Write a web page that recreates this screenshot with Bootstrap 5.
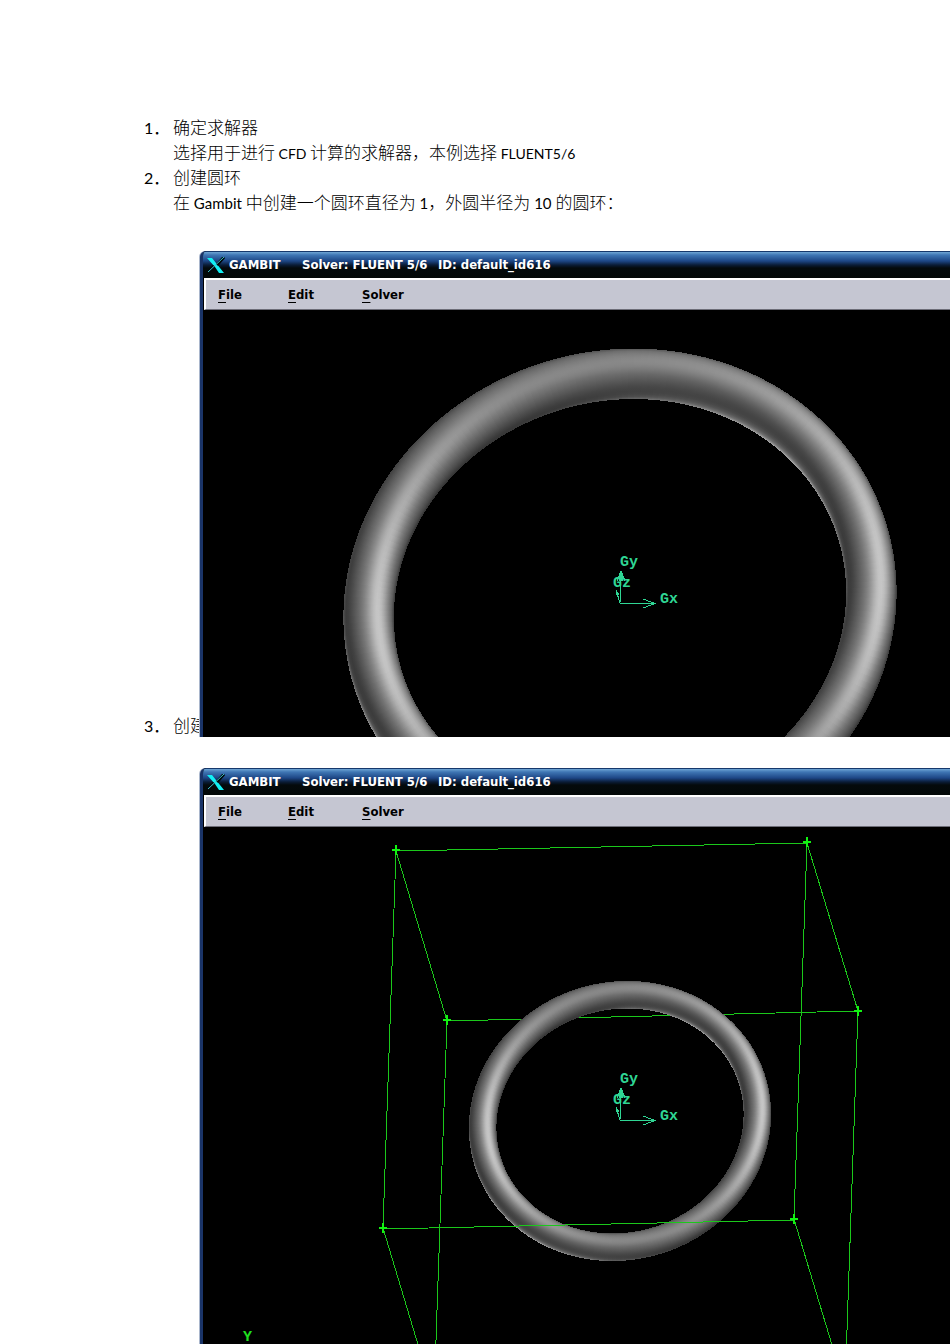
<!DOCTYPE html>
<html lang="zh-CN">
<head>
<meta charset="utf-8">
<meta name="viewport" content="width=device-width, initial-scale=1">
<title>GAMBIT</title>
<link href="https://cdn.jsdelivr.net/npm/bootstrap@5.3.0/dist/css/bootstrap.min.css" rel="stylesheet">
<style>
  body { background: #fff; color: #000; overflow-x: hidden; }
  .doc { padding-top: 115px; font: 300 17px/25px Lato, "Noto Sans CJK SC", sans-serif; }
  .step-line { padding-left: 144px; }
  .step-no { width: 29px; font-size: 16px; font-weight: 400; flex: none; }
  .latin { font-size: 15px; line-height: 1; font-weight: 400; }
  .latin-caps { font-size: 14px; }
  .step-three { margin-top: -24px; }
  .shot { position: relative; z-index: 1; margin: 36px 0 0 200px; background: #000;
    border-left: 3px solid #1a3468; border-top-left-radius: 6px; overflow: hidden;
    box-shadow: -1px 0 0 #a9b6cc; }
  .shot-second { margin-top: 30px; }
  .title-strip { height: 27px; border-top: 1px solid #16386c; color: #fff;
    background: linear-gradient(#6fa5d4 0, #3f76b4 3px, #1d4685 9px, #0a1c36 13px, #040a0c 16px, #030807 100%);
    font: bold 13px/26px "DejaVu Sans Condensed", "DejaVu Sans", sans-serif; }
  .title-app { width: 73px; }
  .title-solver { width: 136px; }
  .menu-strip { height: 32px; margin-left: 1px; background: #c5c6d2; border-top: 2px solid #fff;
    border-left: 2px solid #fff; border-bottom: 1px solid #6d6d78; padding-left: 12px; }
  .menu-strip button { border: 0; padding: 0; background: none; color: #000; text-align: left;
    font: bold 13px/28px "DejaVu Sans Condensed", "DejaVu Sans", sans-serif; }
  .menu-strip u { text-underline-offset: 3px; text-decoration-thickness: 1px; }
  .menu-file { width: 70px; }
  .menu-edit { width: 74px; }
  .scene { display: block; width: 100%; height: 427px; }
  .scene-tall { height: 517px; }
  .axes { fill: none; stroke: #2fd694; shape-rendering: crispEdges; }
  .glyphs { font: bold 15px "Liberation Mono", monospace; fill: #2fd694; stroke: none; }
  .glyphs-y { fill: #1fe01f; }
  .brick { fill: none; stroke: #1bc81b; shape-rendering: crispEdges; }
  .corner { stroke: #12f312; stroke-width: 2; }
</style>
</head>
<body>
<svg width="0" height="0" class="position-absolute" aria-hidden="true">
  <defs>
    <g id="torus" shape-rendering="crispEdges"></g>
    <g id="axes" class="axes">
      <path d="M.5-1V-29M0 .5H35M23-4 35 .5 23 5M0 0-4-13M-4-13-4-8M-4-13-1-8"/>
      <path d="M1-32-3-22M1-32 5-22M1-32V-22M0-30-1-22M2-30 3-22"/>
      <g class="glyphs"><text x="0" y="-37">Gy</text><text x="-7" y="-16">Gz</text><text x="40" y="0">Gx</text></g>
    </g>
    <path id="corner" class="corner" d="M-4 0H4M0-5V5"/>
    <g id="xlogo">
      <path d="M0 1H5L17 16H12L8 10Z" fill="#12f0f4"/>
      <path d="M17 0 10 8M7 9 1 15" stroke="#02080a" stroke-width="3"/>
      <path d="M17 0 1 15" stroke="#3cc4cc" stroke-width="1"/>
    </g>
  </defs>
</svg>

<main class="doc">
  <div class="step-line d-flex"><span class="step-no">1．</span><span>确定求解器<br>选择用于进行<span class="latin latin-caps"> CFD </span>计算的求解器，本例选择<span class="latin latin-caps"> FLUENT5/6</span></span></div>
  <div class="step-line d-flex"><span class="step-no">2．</span><span>创建圆环<br>在<span class="latin"> Gambit </span>中创建一个圆环直径为<span class="latin"> 1</span>，外圆半径为<span class="latin"> 10 </span>的圆环：</span></div>

  <figure class="shot">
    <div class="title-strip d-flex align-items-center text-nowrap">
      <svg class="ms-1 me-1 flex-shrink-0" width="18" height="16" aria-hidden="true"><use href="#xlogo"/></svg>
      <span class="title-app flex-shrink-0">GAMBIT</span><span class="title-solver flex-shrink-0">Solver: FLUENT 5/6</span><span>ID: default_id616</span>
    </div>
    <nav class="menu-strip d-flex">
      <button type="button" class="menu-file"><u>F</u>ile</button><button type="button" class="menu-edit"><u>E</u>dit</button><button type="button"><u>S</u>olver</button>
    </nav>
    <svg class="scene" role="img" aria-label="圆环">
      <g transform="translate(417 293)">
        <use href="#torus" y="1" transform="scale(1.83)"/>
        <use href="#axes"/>
      </g>
    </svg>
  </figure>

  <div class="step-line step-three d-flex"><span class="step-no">3．</span><span>创建</span></div>

  <figure class="shot shot-second mb-0">
    <div class="title-strip d-flex align-items-center text-nowrap">
      <svg class="ms-1 me-1 flex-shrink-0" width="18" height="16" aria-hidden="true"><use href="#xlogo"/></svg>
      <span class="title-app flex-shrink-0">GAMBIT</span><span class="title-solver flex-shrink-0">Solver: FLUENT 5/6</span><span>ID: default_id616</span>
    </div>
    <nav class="menu-strip d-flex">
      <button type="button" class="menu-file"><u>F</u>ile</button><button type="button" class="menu-edit"><u>E</u>dit</button><button type="button"><u>S</u>olver</button>
    </nav>
    <svg class="scene scene-tall" role="img" aria-label="长方体与圆环">
      <g transform="translate(417 293)">
        <path class="brick" d="M-224-269 187-277 238-109-173-99ZM-224-269-237 108-186 278-173-99M187-277 174 99 225 268 238-109"/>
        <use href="#torus" y="1"/>
        <path class="brick" d="M-237 109 174 100"/>
        <use href="#corner" x="-224" y="-270"/><use href="#corner" x="187" y="-278"/>
        <use href="#corner" x="238" y="-109"/><use href="#corner" x="-173" y="-100"/>
        <use href="#corner" x="-237" y="108"/><use href="#corner" x="174" y="99"/>
        <use href="#axes"/>
      </g>
      <text class="glyphs glyphs-y" x="40" y="514">Y</text>
    </svg>
  </figure>
</main>

<script>
// Shaded torus, orthographic view: each short slice of the tube is one quad
// filled with a gradient that runs across the tube. Vectors are x right, y up, z to the viewer.
(function () {
  const R = 138.4, r = 13.8, N = 240, STOPS = 20;
  const e1 = [0.992, 0.021, 0.128], e2 = [0.031, 0.912, -0.407];
  const L1 = [0.37, 0.38, 0.85], L2 = [-0.55, -0.65, -0.22];
  const dot = (a, b) => a[0] * b[0] + a[1] * b[1] + a[2] * b[2];
  const cross = (a, b) => [a[1] * b[2] - a[2] * b[1], a[2] * b[0] - a[0] * b[2], a[0] * b[1] - a[1] * b[0]];
  function light(n) {
    const d = Math.max(0, dot(n, L1)), b = Math.max(0, dot(n, L2));
    return Math.round(50 + 84 * d * d + 54 * Math.pow(d, 12) + 190 * Math.pow(b, 3) + 24 * Math.max(0, n[1]));
  }
  function frame(t) {
    const c = Math.cos(t), s = Math.sin(t);
    const p = e1.map((v, i) => R * (c * v + s * e2[i]));
    const tan = e1.map((v, i) => -s * v + c * e2[i]);
    const k = Math.hypot(tan[0], tan[1]);
    const m = [tan[1] / k, -tan[0] / k, 0];
    let w = cross(m, tan);
    if (w[2] < 0) w = w.map(v => -v);
    return { p, m, w };
  }
  const edge = (f, o) => [(f.p[0] + f.m[0] * o).toFixed(2), (-(f.p[1] + f.m[1] * o)).toFixed(2)];
  let out = "";
  for (let i = 0; i < N; i++) {
    const a = frame(2 * Math.PI * i / N), b = frame(2 * Math.PI * (i + 1.3) / N), c = frame(2 * Math.PI * (i + 0.5) / N);
    const g0 = edge(c, -r), g1 = edge(c, r);
    out += `<linearGradient id="slice${i}" gradientUnits="userSpaceOnUse" x1="${g0[0]}" y1="${g0[1]}" x2="${g1[0]}" y2="${g1[1]}">`;
    for (let j = 0; j <= STOPS; j++) {
      const q = -1 + 2 * j / STOPS, z = Math.sqrt(Math.max(0, 1 - q * q));
      const v = light(c.m.map((x, n) => q * x + z * c.w[n]));
      out += `<stop offset="${j / STOPS}" stop-color="rgb(${v},${v},${v})"/>`;
    }
    out += `</linearGradient><polygon fill="url(#slice${i})" points="${[edge(a, -r), edge(a, r), edge(b, r), edge(b, -r)].join(" ")}"/>`;
  }
  document.getElementById("torus").innerHTML = out;
})();
</script>
<script src="https://cdn.jsdelivr.net/npm/bootstrap@5.3.0/dist/js/bootstrap.bundle.min.js"></script>
</body>
</html>
